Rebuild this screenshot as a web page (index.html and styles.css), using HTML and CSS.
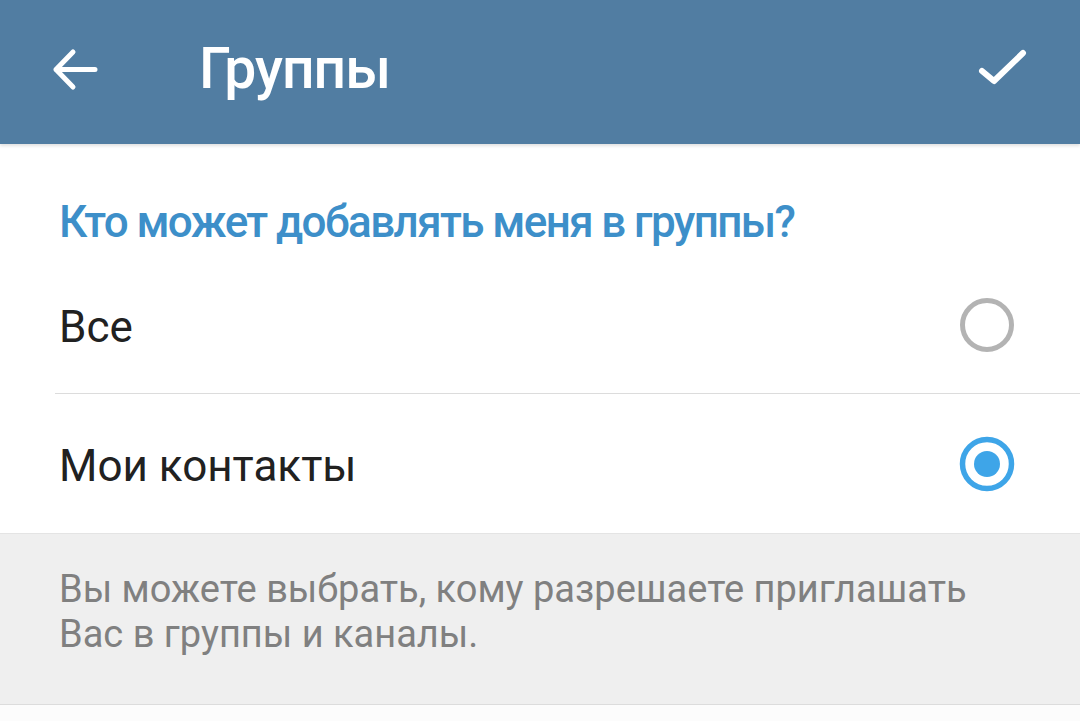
FILE: index.html
```html
<!DOCTYPE html>
<html lang="ru">
<head>
<meta charset="utf-8">
<title>Группы</title>
<link rel="stylesheet" href="styles.css">
</head>
<body>
<header class="bar">
  <div class="bar-back">
    <svg width="50" height="50" viewBox="0 0 50 50"><path d="M45 25.5H6M6 25.5L23 8M6 25.5L23 43" fill="none" stroke="#fff" stroke-width="5" stroke-linecap="round" stroke-linejoin="round"/></svg>
  </div>
  <h1 class="bar-title">Группы</h1>
  <div class="bar-done">
    <svg width="56" height="50" viewBox="0 0 56 50"><path d="M8 27L20 37L49 9" fill="none" stroke="#fff" stroke-width="6" stroke-linecap="round" stroke-linejoin="round"/></svg>
  </div>
</header>
<main class="card">
  <div class="section-title">Кто может добавлять меня в группы?</div>
  <div class="row">
    <span class="row-label">Все</span>
    <svg class="radio" width="58" height="58" viewBox="0 0 58 58"><circle cx="29" cy="29" r="24.5" fill="none" stroke="#b3b3b3" stroke-width="5"/></svg>
  </div>
  <div class="row row-last">
    <span class="row-label">Мои контакты</span>
    <svg class="radio" width="58" height="58" viewBox="0 0 58 58"><circle cx="29" cy="29" r="24.5" fill="none" stroke="#3ea5e8" stroke-width="5.5"/><circle cx="29" cy="29" r="13" fill="#3ea5e8"/></svg>
  </div>
</main>
<section class="hint">
  <p class="hint-text">Вы можете выбрать, кому разрешаете приглашать<br>Вас в группы и каналы.</p>
</section>
</body>
</html>
```

FILE: styles.css
```css
html, body {
  margin: 0;
  padding: 0;
  background: #fcfcfc;
  font-family: Roboto, "Noto Sans", "Liberation Sans", sans-serif;
}

.bar {
  height: 144px;
  background: #517da2;
  display: flex;
  align-items: center;
  box-shadow: 0 2px 3px rgba(0, 0, 0, 0.12);
  position: relative;
  z-index: 1;
}

.bar-back {
  width: 50px;
  height: 50px;
  margin-left: 50px;
  margin-top: -6px;
}

.bar-title {
  margin: 0 0 0 99px;
  font-size: 57px;
  font-weight: 500;
  letter-spacing: -1px;
  color: #fff;
  line-height: 1;
  flex: 1;
  margin-top: -8px;
}

.bar-done {
  width: 56px;
  height: 50px;
  margin-right: 50px;
  margin-top: -7px;
}

.card {
  background: #fff;
  display: block;
}

.section-title {
  font-size: 44px;
  font-weight: 500;
  letter-spacing: -1.6px;
  color: #3d8fc9;
  line-height: 50px;
  padding: 53px 0 9px 59px;
}

.row {
  height: 138px;
  margin-left: 55px;
  display: flex;
  align-items: center;
  justify-content: space-between;
  border-bottom: 1px solid #dcdcdc;
  box-sizing: border-box;
}

.row-last {
  border-bottom: none;
  height: 139px;
}

.row-label {
  font-size: 44px;
  color: #212121;
  padding-left: 4px;
  padding-top: 4px;
}

.radio {
  margin-right: 64px;
}

.hint {
  background: #efefef;
  border-top: 1px solid #e4e4e4;
  border-bottom: 1px solid #dcdcdc;
  box-sizing: border-box;
  height: 172px;
}

.hint-text {
  margin: 0;
  padding: 33px 0 0 59px;
  font-size: 38px;
  line-height: 45px;
  color: #808080;
}
```
